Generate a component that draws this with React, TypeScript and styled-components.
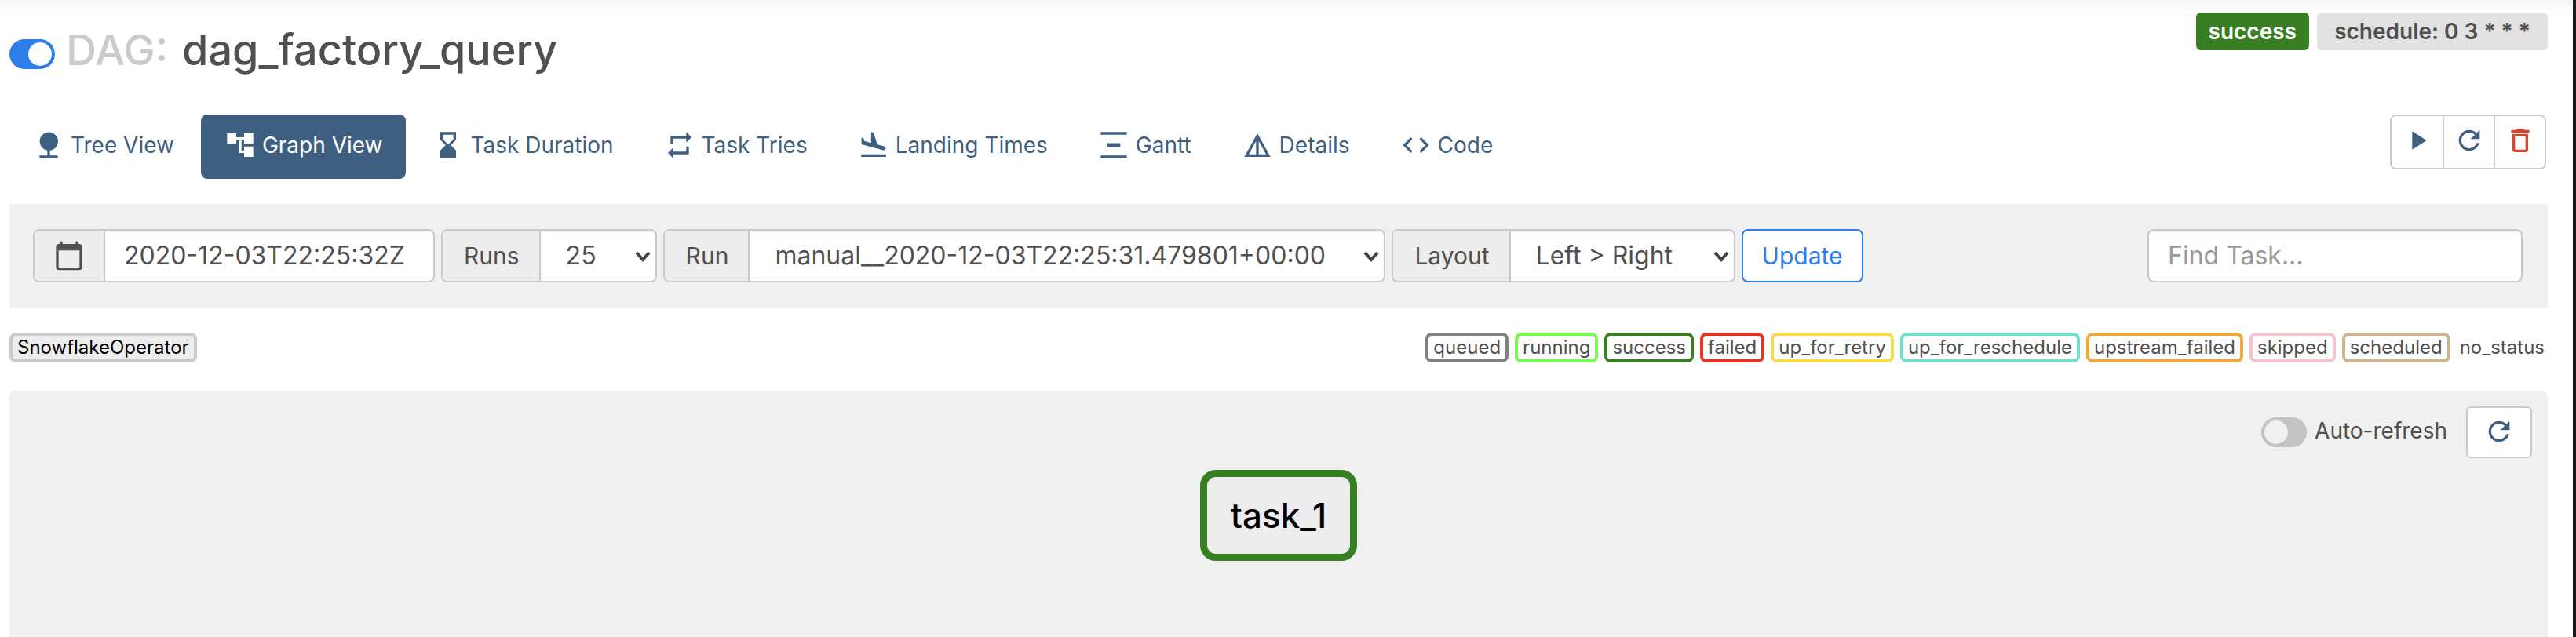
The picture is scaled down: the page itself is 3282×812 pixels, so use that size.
import React from 'react';
import styled, { createGlobalStyle } from 'styled-components';

const colors = {
  text: '#51504f',
  muted: '#cbcbcb',
  navy: '#3f5f80',
  blue: '#2f7de8',
  green: '#377f22',
  red: '#d7452b',
  border: '#cacaca',
  panel: '#f0f0f0',
  addon: '#ededed',
};

const GlobalStyle = createGlobalStyle`
  *, *::before, *::after { box-sizing: border-box; }
  body {
    margin: 0;
    background: #fff;
    color: ${colors.text};
    font-family: Inter, "Liberation Sans", sans-serif;
    font-size: 28px;
    line-height: 40px;
  }
  button, input, select { font: inherit; color: inherit; margin: 0; }
`;

const Page = styled.div`
  display: flex;
  flex-direction: column;
  min-height: 100vh;
  padding: 0 32px 0 12px;
  border-right: 4px solid #191c1d;
  background: linear-gradient(#f6f6f6, #fff 22px);
`;

const Header = styled.header`
  display: flex;
  justify-content: space-between;
  align-items: flex-start;
  padding-top: 16px;
`;

const Title = styled.h1`
  display: flex;
  align-items: center;
  margin: 16px 0 0;
  font-size: 54px;
  line-height: 64px;
  font-weight: 500;
  white-space: pre;
`;

const TitlePrefix = styled.span`
  margin: 0 18px 0 14px;
  color: ${colors.muted};
`;

const Toggle = styled.input.attrs({ type: 'checkbox' })`
  appearance: none;
  display: flex;
  align-items: center;
  width: 58px;
  height: 38px;
  padding: 0 4px;
  border-radius: 19px;
  background: #c4c3c1;
  cursor: pointer;
  &::before {
    content: '';
    width: 30px;
    height: 30px;
    border-radius: 50%;
    background: ${colors.panel};
  }
  &:checked {
    justify-content: flex-end;
    background: ${colors.blue};
  }
  &:checked::before { background: #fdfdfc; }
`;

const TitleToggle = styled(Toggle)`
  margin-top: 10px;
`;

const Labels = styled.div`
  display: flex;
  gap: 10px;
`;

const Label = styled.span<{ $solid?: boolean }>`
  padding: 0 16px;
  border-radius: 6px;
  font-size: 28px;
  line-height: 48px;
  font-weight: 600;
  white-space: pre;
  color: ${(p) => (p.$solid ? '#fff' : colors.text)};
  background: ${(p) => (p.$solid ? colors.green : '#e2e2e2')};
`;

const ScheduleLabel = styled(Label)`
  min-width: 294px;
  text-align: center;
`;

const NavRow = styled.div`
  display: flex;
  justify-content: space-between;
  align-items: flex-start;
  margin: 50px 0 32px;
`;

const Tabs = styled.nav`
  display: flex;
  gap: 4px;
`;

const Tab = styled.a<{ $active?: boolean }>`
  display: flex;
  align-items: center;
  gap: 8px;
  height: 82px;
  padding: 0 30px 4px;
  border-radius: 8px;
  text-decoration: none;
  white-space: nowrap;
  color: ${(p) => (p.$active ? '#fff' : colors.navy)};
  background: ${(p) => (p.$active ? colors.navy : 'transparent')};
`;

const IconSvg = styled.svg`
  flex: none;
  display: block;
  width: 40px;
  height: 40px;
  fill: currentColor;
`;

const ButtonGroup = styled.div`
  display: flex;
  margin-right: 2px;
  border: 2px solid ${colors.border};
  border-radius: 8px;
  overflow: hidden;
`;

const GroupButton = styled.button<{ $danger?: boolean }>`
  display: grid;
  place-items: center;
  width: 65px;
  height: 66px;
  padding: 0 0 4px;
  border: 0;
  background: #fff;
  color: ${(p) => (p.$danger ? colors.red : colors.navy)};
  cursor: pointer;
  & + & { border-left: 2px solid ${colors.border}; }
`;

const FilterBar = styled.form`
  display: flex;
  align-items: center;
  gap: 8px;
  padding: 32px 32px 32px 30px;
  background: ${colors.panel};
  font-size: 32px;
`;

const Field = styled.div`
  display: flex;
  height: 68px;
  border: 2px solid ${colors.border};
  border-radius: 8px;
  background: #fff;
  overflow: hidden;
`;

const Addon = styled.label`
  display: flex;
  align-items: center;
  padding: 0 25px 0 27px;
  border-right: 2px solid ${colors.border};
  background: ${colors.addon};
  font-size: 30px;
`;

const IconAddon = styled(Addon)`
  padding: 0 24px;
`;

const TextInput = styled.input<{ $width: number }>`
  width: ${(p) => p.$width}px;
  padding: 0 24px;
  border: 0;
  outline: 0;
  background: transparent;
  box-shadow: inset 0 2px 2px rgba(0, 0, 0, 0.07);
  &::placeholder { color: #999; opacity: 1; }
`;

const SearchField = styled(Field)`
  margin-left: auto;
`;

const SelectBox = styled.div<{ $width: number }>`
  position: relative;
  display: flex;
  width: ${(p) => p.$width}px;
`;

const Select = styled.select`
  appearance: none;
  width: 100%;
  padding: 0 32px;
  border: 0;
  outline: 0;
  background: transparent;
  box-shadow: inset 0 2px 2px rgba(0, 0, 0, 0.07);
`;

const Chevron = styled.svg`
  position: absolute;
  right: 6px;
  top: 26px;
  width: 20px;
  height: 14px;
  fill: none;
  stroke: #444;
  stroke-width: 4;
  pointer-events: none;
`;

const UpdateButton = styled.button`
  height: 68px;
  padding: 0 24px;
  border: 2px solid ${colors.blue};
  border-radius: 8px;
  background: #fff;
  color: ${colors.blue};
  font-size: 30px;
  cursor: pointer;
`;

const Legend = styled.div`
  display: flex;
  gap: 8px;
  margin: 32px 0 36px;
  font-size: 24px;
  line-height: 30px;
`;

const LegendItem = styled.span<{ $color?: string }>`
  padding: ${(p) => (p.$color ? '0 6px' : '4px')};
  border: ${(p) => (p.$color ? `4px solid ${p.$color}` : '0')};
  border-radius: 8px;
  background: #fff;
`;

const OperatorItem = styled(LegendItem)`
  margin-right: auto;
  background: ${colors.addon};
  color: #000;
`;

const Graph = styled.main`
  flex: 1;
  display: flex;
  flex-direction: column;
  padding: 20px 20px 0;
  border-radius: 8px 8px 0 0;
  background: ${colors.panel};
`;

const RefreshRow = styled.div`
  display: flex;
  justify-content: flex-end;
  align-items: center;
`;

const RefreshLabel = styled.label`
  display: flex;
  align-items: center;
  gap: 10px;
  margin-right: 24px;
`;

const RefreshText = styled.span`
  padding-bottom: 4px;
`;

const RefreshButton = styled.button`
  display: grid;
  place-items: center;
  width: 84px;
  height: 66px;
  padding: 0 0 2px;
  border: 2px solid ${colors.border};
  border-radius: 6px;
  background: #fff;
  color: ${colors.navy};
  cursor: pointer;
`;

const TaskNode = styled.div`
  align-self: center;
  margin-top: 15px;
  padding: 0 30px;
  border: 9px solid ${colors.green};
  border-radius: 20px;
  background: #ededed;
  color: #000;
  font-size: 44px;
  font-weight: 500;
  line-height: 98px;
`;

const Icon = ({ d }: { d: string }) => (
  <IconSvg viewBox="0 0 24 24" aria-hidden="true">
    <path d={d} />
  </IconSvg>
);

const icons = {
  tree: 'M13 16.12c3.47-.41 6.17-3.36 6.17-6.95 0-3.87-3.13-7-7-7s-7 3.13-7 7c0 3.47 2.52 6.34 5.83 6.89V20H5v2h14v-2h-6v-3.88z',
  graph: 'M22 11V3h-7v3H9V3H2v8h7V8h2v10h4v3h7v-8h-7v3h-2V8h2v3h7z',
  duration: 'M18 22l-.01-6L14 12l3.99-4.01L18 2H6v6l4 4-4 3.99V22h12zM8 7.5V4h8v3.5l-4 4-4-4z',
  tries: 'M7 7h10v3l4-4-4-4v3H5v6h2V7zm10 10H7v-3l-4 4 4 4v-3h12v-6h-2v4z',
  landing: 'M2.5 19h19v2h-19v-2zm16.84-3.15c.8.21 1.62-.26 1.84-1.06.21-.8-.26-1.62-1.06-1.84l-5.31-1.42-2.76-9.02L10.12 2v8.28L5.15 8.95l-.93-2.32-1.45-.39v5.17l16.57 4.44z',
  gantt: 'M22 2v2H2V2h20zM7 10.5v3h10v-3H7zM2 20v2h20v-2H2z',
  details: 'M12 3L2 21h20L12 3zm1 5.92L18.6 19H13V8.92zm-2 0V19H5.4L11 8.92z',
  code: 'M9.4 16.6L4.8 12l4.6-4.6L8 6l-6 6 6 6 1.4-1.4zm5.2 0l4.6-4.6-4.6-4.6L16 6l6 6-6 6-1.4-1.4z',
  play: 'M8 5v14l11-7z',
  refresh: 'M17.65 6.35C16.2 4.9 14.21 4 12 4c-4.42 0-7.99 3.58-7.99 8s3.57 8 7.99 8c3.73 0 6.84-2.55 7.73-6h-2.08c-.82 2.33-3.04 4-5.65 4-3.31 0-6-2.69-6-6s2.69-6 6-6c1.66 0 3.14.69 4.22 1.78L13 11h7V4l-2.35 2.35z',
  trash: 'M6 19c0 1.1.9 2 2 2h8c1.1 0 2-.9 2-2V7H6v12zM8 9h8v10H8V9zm7.5-5l-1-1h-5l-1 1H5v2h14V4h-3.5z',
  calendar: 'M20 3h-1V1h-2v2H7V1H5v2H4c-1.1 0-2 .9-2 2v16c0 1.1.9 2 2 2h16c1.1 0 2-.9 2-2V5c0-1.1-.9-2-2-2zm0 18H4V8h16v13z',
};

const tabs = [
  { label: 'Tree View', icon: icons.tree },
  { label: 'Graph View', icon: icons.graph, active: true },
  { label: 'Task Duration', icon: icons.duration },
  { label: 'Task Tries', icon: icons.tries },
  { label: 'Landing Times', icon: icons.landing },
  { label: 'Gantt', icon: icons.gantt },
  { label: 'Details', icon: icons.details },
  { label: 'Code', icon: icons.code },
];

const states = [
  { name: 'queued', color: '#808080' },
  { name: 'running', color: '#75fb4c' },
  { name: 'success', color: colors.green },
  { name: 'failed', color: '#ea3323' },
  { name: 'up_for_retry', color: '#f9d849' },
  { name: 'up_for_reschedule', color: '#74dece' },
  { name: 'upstream_failed', color: '#f2a73b' },
  { name: 'skipped', color: '#f5c2cb' },
  { name: 'scheduled', color: '#cdb58f' },
  { name: 'no_status' },
];

type SelectFieldProps = { id: string; label: string; value: string; width: number };

const SelectField = ({ id, label, value, width }: SelectFieldProps) => (
  <Field>
    <Addon htmlFor={id}>{label}</Addon>
    <SelectBox $width={width}>
      <Select id={id} defaultValue={value}>
        <option>{value}</option>
      </Select>
      <Chevron viewBox="0 0 20 14" aria-hidden="true">
        <path d="M2 2l8 9 8-9" />
      </Chevron>
    </SelectBox>
  </Field>
);

export default function App() {
  return (
    <>
      <GlobalStyle />
      <Page>
        <Header>
          <Title>
            <TitleToggle defaultChecked aria-label="Pause or unpause DAG" />
            <TitlePrefix>DAG:</TitlePrefix>
            <span>dag_factory_query</span>
          </Title>
          <Labels>
            <Label $solid>success</Label>
            <ScheduleLabel>schedule: 0 3 * * *</ScheduleLabel>
          </Labels>
        </Header>

        <NavRow>
          <Tabs>
            {tabs.map((t) => (
              <Tab key={t.label} href="#" $active={t.active}>
                <Icon d={t.icon} />
                <span>{t.label}</span>
              </Tab>
            ))}
          </Tabs>
          <ButtonGroup>
            <GroupButton aria-label="Trigger DAG"><Icon d={icons.play} /></GroupButton>
            <GroupButton aria-label="Refresh DAG"><Icon d={icons.refresh} /></GroupButton>
            <GroupButton aria-label="Delete DAG" $danger><Icon d={icons.trash} /></GroupButton>
          </ButtonGroup>
        </NavRow>

        <FilterBar onSubmit={(e) => e.preventDefault()}>
          <Field>
            <IconAddon htmlFor="base-date" aria-label="Base date"><Icon d={icons.calendar} /></IconAddon>
            <TextInput id="base-date" $width={418} defaultValue="2020-12-03T22:25:32Z" />
          </Field>
          <SelectField id="runs" label="Runs" value="25" width={146} />
          <SelectField id="run" label="Run" value="manual__2020-12-03T22:25:31.479801+00:00" width={808} />
          <SelectField id="layout" label="Layout" value="Left > Right" width={284} />
          <UpdateButton type="submit">Update</UpdateButton>
          <SearchField>
            <TextInput aria-label="Find task" $width={474} placeholder="Find Task..." />
          </SearchField>
        </FilterBar>

        <Legend>
          <OperatorItem $color={colors.border}>SnowflakeOperator</OperatorItem>
          {states.map((s) => (
            <LegendItem key={s.name} $color={s.color}>{s.name}</LegendItem>
          ))}
        </Legend>

        <Graph>
          <RefreshRow>
            <RefreshLabel>
              <Toggle />
              <RefreshText>Auto-refresh</RefreshText>
            </RefreshLabel>
            <RefreshButton aria-label="Refresh graph"><Icon d={icons.refresh} /></RefreshButton>
          </RefreshRow>
          <TaskNode>task_1</TaskNode>
        </Graph>
      </Page>
    </>
  );
}
